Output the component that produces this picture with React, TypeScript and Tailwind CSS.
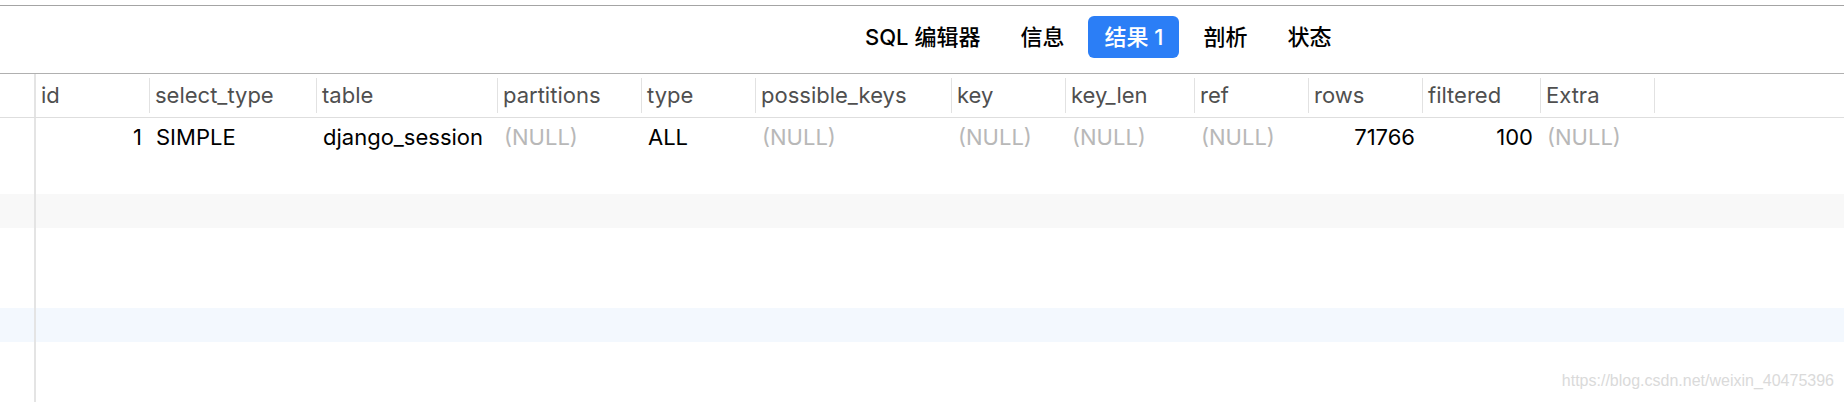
import React from 'react';

const FONT = { fontFamily: 'Inter, "Noto Sans CJK SC", sans-serif' };

interface Column {
  name: string;
  width: string;
}

const columns: Column[] = [
  { name: 'id', width: 'w-[114px]' },
  { name: 'select_type', width: 'w-[167px]' },
  { name: 'table', width: 'w-[181px]' },
  { name: 'partitions', width: 'w-[144px]' },
  { name: 'type', width: 'w-[114px]' },
  { name: 'possible_keys', width: 'w-[196px]' },
  { name: 'key', width: 'w-[114px]' },
  { name: 'key_len', width: 'w-[129px]' },
  { name: 'ref', width: 'w-[114px]' },
  { name: 'rows', width: 'w-[114px]' },
  { name: 'filtered', width: 'w-[118px]' },
  { name: 'Extra', width: 'w-[114px]' },
];

// one result row; null = (NULL), align right for numbers
const row: { value: string | null; right?: boolean }[] = [
  { value: '1', right: true },
  { value: 'SIMPLE' },
  { value: 'django_session' },
  { value: null },
  { value: 'ALL' },
  { value: null },
  { value: null },
  { value: null },
  { value: null },
  { value: '71766', right: true },
  { value: '100', right: true },
  { value: null },
];

const tabs = ['SQL 编辑器', '信息', '结果 1', '剖析', '状态'];

// empty rows under the result; some carry a faint stripe
const emptyRows = ['bg-white', 'bg-[#f8f8f8]', 'bg-white', 'bg-white', 'bg-[#f3f8fe]', 'bg-white', 'bg-white'];

export default function App() {
  return (
    <div className="relative h-[402px] w-[1844px] overflow-hidden bg-white" style={FONT}>
      <div className="h-[5px]" />
      <div className="h-px bg-[#a4a4a4]" />

      {/* Tabs */}
      <div className="flex h-[67px] items-start pl-[849px] pt-[10px]">
        <div className="flex gap-2">
          {tabs.map((t, i) => (
            <div
              key={t}
              className={
                i === 2
                  ? 'flex h-[42px] items-center rounded-[6px] bg-[#2b7ef6] px-4 text-[22px] font-medium text-white'
                  : 'flex h-[42px] items-center rounded-[6px] px-4 text-[22px] font-medium text-black'
              }
            >
              {t}
            </div>
          ))}
        </div>
      </div>

      {/* Header */}
      <div className="flex h-[45px] border-t border-b border-t-[#b0b0b0] border-b-[#dedede]">
        <div className="w-[34px]" />
        <div className="w-[2px] bg-[#e4e4e4]" />
        {columns.map((c) => (
          <div key={c.name} className={`flex ${c.width} items-center`}>
            <span className="flex-1 pl-[5px] text-[22px] text-[#4f4f4f]">{c.name}</span>
            <div className="h-[35px] w-px bg-[#e2e2e2]" />
          </div>
        ))}
      </div>

      {/* Result row */}
      <div className="flex h-[38px]">
        <div className="w-[34px]" />
        <div className="w-[2px] bg-[#e4e4e4]" />
        {columns.map((c, i) => {
          const cell = row[i];
          return (
            <div
              key={c.name}
              className={`flex ${c.width} items-center ${cell.right ? 'justify-end pr-[8px]' : 'pl-[6px]'}`}
            >
              {cell.value === null ? (
                <span className="text-[22px] text-[#b8b8b8]">(NULL)</span>
              ) : (
                <span className="text-[22px] text-black">{cell.value}</span>
              )}
            </div>
          );
        })}
      </div>

      {emptyRows.map((bg, i) => (
        <div key={i} className="flex h-[38px]">
          <div className={`h-[34px] w-[34px] ${bg}`} />
          <div className="w-[2px] bg-[#e4e4e4]" />
          <div className={`h-[34px] flex-1 ${bg}`} />
        </div>
      ))}

      <div
        className="absolute bottom-[9px] right-[10px] text-[16px] text-[#dadada]"
        style={{ fontFamily: '"Liberation Sans", Arial, sans-serif' }}
      >
        https://blog.csdn.net/weixin_40475396
      </div>
    </div>
  );
}
